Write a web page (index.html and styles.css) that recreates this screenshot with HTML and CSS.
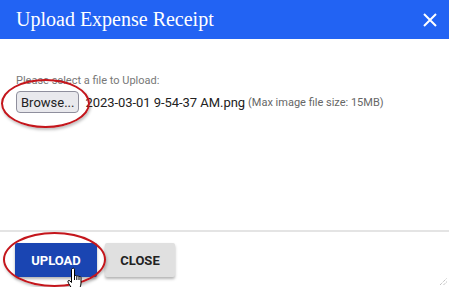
FILE: index.html
```html
<!DOCTYPE html>
<html lang="en">
<head>
    <meta charset="UTF-8">
    <meta name="viewport" content="width=device-width, initial-scale=1.0">
    <title>Upload Expense Receipt</title>
    <link rel="stylesheet" href="styles.css">
</head>
<body>
    <div class="dialog">
        <div class="dialog-header">
            <h1>Upload Expense Receipt</h1>
            <button class="close-x" aria-label="Close">
                <svg width="14" height="14" viewBox="0 0 14 14">
                    <path d="M1 1 L13 13 M13 1 L1 13" stroke="#fff" stroke-width="2" fill="none"/>
                </svg>
            </button>
        </div>

        <div class="dialog-body">
            <label class="file-label">Please select a file to Upload:</label>
            <div class="file-row">
                <span class="browse-wrap">
                    <button class="browse">Browse...</button>
                    <!-- red annotation ring -->
                    <span class="ring ring-browse"></span>
                </span>
                <span class="file-name">2023-03-01 9-54-37 AM.png</span>
                <span class="file-hint">(Max image file size: 15MB)</span>
            </div>
        </div>

        <div class="dialog-footer">
            <span class="upload-wrap">
                <button class="btn btn-upload">UPLOAD</button>
                <span class="ring ring-upload"></span>
                <svg class="cursor" width="18" height="24" viewBox="0 0 18 24">
                    <path d="M5.5 1.5 C6.5 0.8 7.5 1.3 7.5 2.5 V9 C8 8.3 9.5 8.3 9.8 9.3 C10.3 8.6 11.8 8.7 12 9.8 C12.5 9.2 14 9.4 14 10.6 V16 C14 19 12.5 21 12.5 23 H5.5 C5 21 1.5 17 1 15 C0.6 13.6 1.8 13 2.8 13.8 L4.5 15.5 V2.5 C4.5 2 5 1.7 5.5 1.5 Z" fill="#fff" stroke="#000" stroke-width="1"/>
                    <path d="M7.5 9 V13 M9.8 9.3 V13 M12 9.8 V13" stroke="#000" stroke-width="1" fill="none"/>
                </svg>
            </span>
            <button class="btn btn-close">CLOSE</button>
        </div>

        <svg class="grip" width="8" height="8" viewBox="0 0 8 8">
            <path d="M1 8 L8 1 M4.5 8 L8 4.5" stroke="#aaa" stroke-width="1" stroke-dasharray="1 1" fill="none"/>
        </svg>
    </div>
</body>
</html>
```

FILE: styles.css
```css
* {
    box-sizing: border-box;
}
html, body {
    margin: 0;
    padding: 0;
    background: #fff;
}
.dialog {
    position: relative;
    width: 449px;
    height: 287px;
    display: flex;
    flex-direction: column;
    font-family: Roboto, "Liberation Sans", sans-serif;
    overflow: hidden;
}
.dialog-header {
    height: 39px;
    flex: none;
    background: #2263f3;
    display: flex;
    align-items: center;
    justify-content: space-between;
    padding: 0 12px 0 16px;
}
.dialog-header h1 {
    margin: 0;
    font-family: "Liberation Serif", serif;
    font-weight: normal;
    font-size: 20px;
    color: #fff;
}
.close-x {
    background: none;
    border: none;
    padding: 0;
    width: 14px;
    height: 14px;
    display: flex;
}
.dialog-body {
    flex: 1;
    padding: 35px 16px 0 16px;
}
.file-label {
    display: block;
    font-size: 11px;
    color: #777;
    margin-bottom: 4px;
}
.file-row {
    display: flex;
    align-items: center;
    gap: 6px;
}
.browse-wrap, .upload-wrap {
    position: relative;
    display: inline-flex;
}
.browse {
    font-family: Roboto, sans-serif;
    font-size: 13px;
    color: #222;
    background: #e9e9ed;
    border: 1px solid #8f8f9d;
    border-radius: 4px;
    height: 22px;
    padding: 0 4px;
}
.file-name {
    font-size: 13px;
    color: #222;
    letter-spacing: -0.05px;
}
.file-hint {
    font-size: 11px;
    color: #666;
    margin-left: -3px;
}
.dialog-footer {
    flex: none;
    border-top: 2px solid #e4e4e4;
    height: 57px;
    display: flex;
    align-items: flex-start;
    gap: 8px;
    padding: 11px 0 0 15px;
}
.btn {
    font-family: Roboto, sans-serif;
    font-size: 13px;
    font-weight: bold;
    border: none;
    border-radius: 2px;
    height: 34px;
    box-shadow: 0 2px 3px rgba(0, 0, 0, 0.3);
}
.btn-upload {
    width: 82px;
    background: #1a45b2;
    color: #fff;
}
.btn-close {
    width: 70px;
    background: #e0e0e0;
    color: #222;
}
.ring {
    position: absolute;
    border: 2px solid #c4161c;
    border-radius: 50%;
    box-shadow: 1px 2px 3px rgba(0, 0, 0, 0.25);
    pointer-events: none;
}
.ring-browse {
    left: -15px;
    top: -12px;
    width: 89px;
    height: 49px;
}
.ring-upload {
    left: -12px;
    top: -11px;
    width: 103px;
    height: 55px;
}
.cursor {
    position: absolute;
    left: 52px;
    top: 24px;
}
.grip {
    position: absolute;
    right: 2px;
    bottom: 2px;
}
```
